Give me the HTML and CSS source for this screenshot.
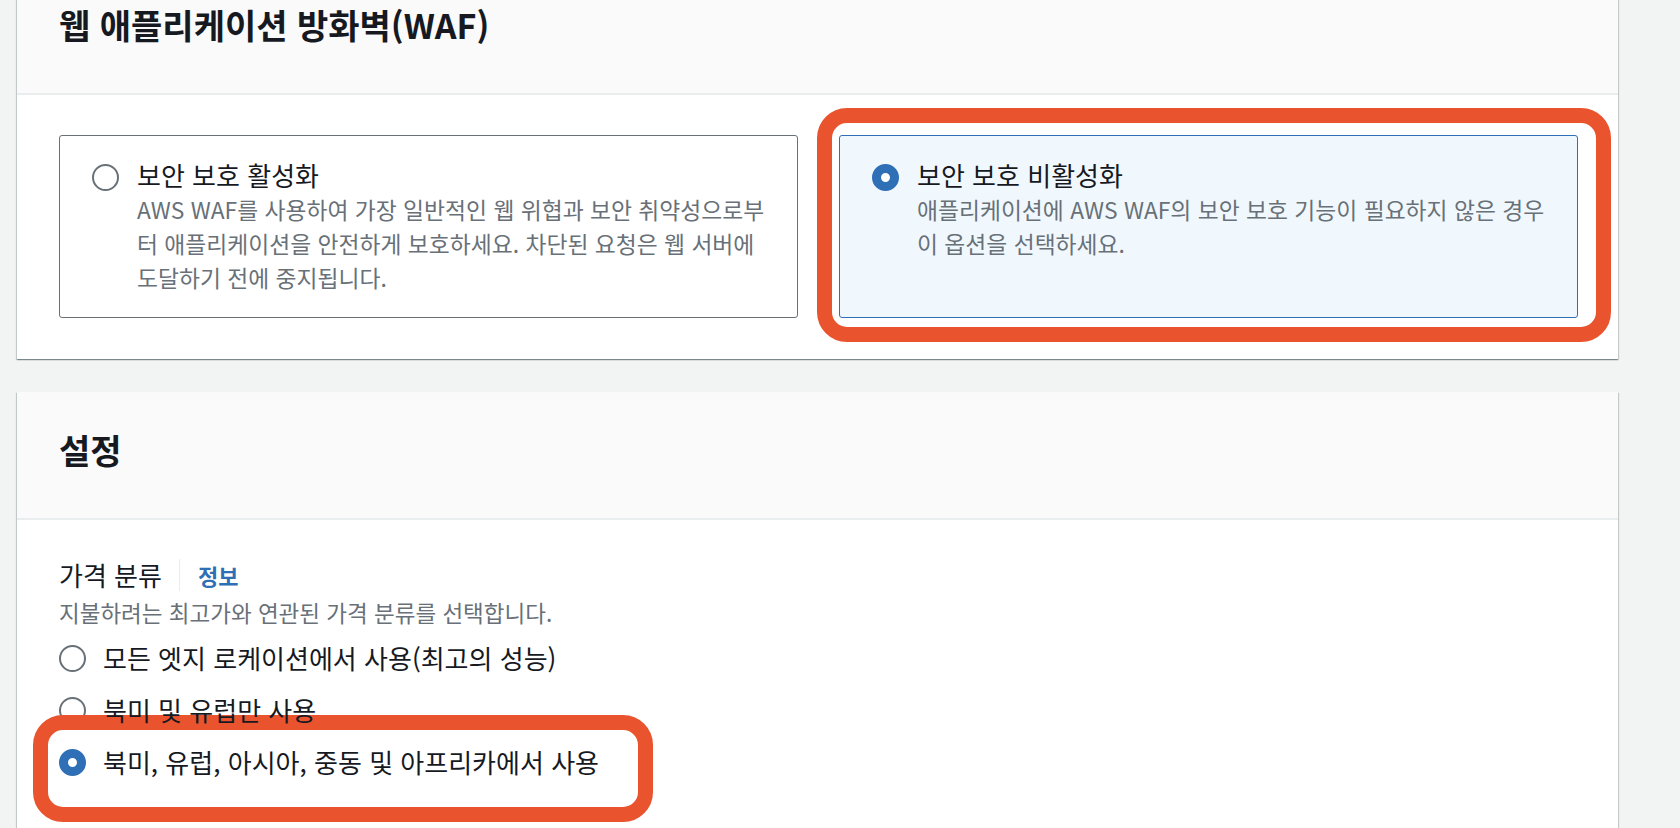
FILE: index.html
```html
<!DOCTYPE html>
<html lang="ko">
<head>
<meta charset="utf-8">
<title>CloudFront 배포 설정</title>
<link rel="stylesheet" href="styles.css">
</head>
<body>
<main class="page">
  <section class="panel">
    <header class="panel-header">
      <h2 class="panel-title">웹 애플리케이션 방화벽(WAF)</h2>
    </header>
    <div class="panel-body">
      <div class="tiles">
        <div class="tile">
          <span class="radio"></span>
          <div class="tile-text">
            <div class="tile-title">보안 보호 활성화</div>
            <div class="tile-desc">AWS WAF를 사용하여 가장 일반적인 웹 위협과 보안 취약성으로부터 애플리케이션을 안전하게 보호하세요. 차단된 요청은 웹 서버에 도달하기 전에 중지됩니다.</div>
          </div>
        </div>
        <div class="tile tile-selected">
          <span class="highlight highlight-tile"></span>
          <span class="radio radio-checked"></span>
          <div class="tile-text">
            <div class="tile-title">보안 보호 비활성화</div>
            <div class="tile-desc">애플리케이션에 AWS WAF의 보안 보호 기능이 필요하지 않은 경우 이 옵션을 선택하세요.</div>
          </div>
        </div>
      </div>
    </div>
  </section>

  <section class="panel">
    <header class="panel-header">
      <h2 class="panel-title">설정</h2>
    </header>
    <div class="panel-body panel-body-settings">
      <div class="field-label">
        <span class="label-text">가격 분류</span>
        <span class="label-sep"></span>
        <a class="info-link">정보</a>
      </div>
      <div class="field-desc">지불하려는 최고가와 연관된 가격 분류를 선택합니다.</div>
      <div class="options">
        <div class="option">
          <span class="radio"></span>
          <span class="option-label">모든 엣지 로케이션에서 사용(최고의 성능)</span>
        </div>
        <div class="option">
          <span class="radio"></span>
          <span class="option-label">북미 및 유럽만 사용</span>
        </div>
        <div class="option option-marked">
          <span class="highlight highlight-option"></span>
          <span class="radio radio-checked"></span>
          <span class="option-label">북미, 유럽, 아시아, 중동 및 아프리카에서 사용</span>
        </div>
      </div>
    </div>
  </section>
</main>
</body>
</html>
```
FILE: styles.css
```css
html {
  overflow: hidden;
}

body {
  margin: 0;
  background: #f2f3f3;
  font-family: "Noto Sans CJK KR", "Noto Sans", sans-serif;
  color: #16191f;
}

.page {
  width: 1601px;
  margin: -33px 0 0 17px;
  display: flex;
  flex-direction: column;
  gap: 33px;
}

.panel {
  background: #ffffff;
  box-shadow: 0 1px 1px 0 rgba(0, 28, 36, 0.3),
              1px 1px 1px 0 rgba(0, 28, 36, 0.15),
              -1px 1px 1px 0 rgba(0, 28, 36, 0.15);
}

.panel-header {
  background: #fafafa;
  border-bottom: 2px solid #eaeded;
  height: 126px;
  box-sizing: content-box;
  padding: 0 42px;
}

.panel-title {
  margin: 0;
  padding-top: 38px;
  font-size: 34px;
  line-height: 40px;
  font-weight: 700;
  color: #16191f;
}

.panel-body {
  padding: 40px 40px 41px 42px;
}

.tiles {
  display: grid;
  grid-template-columns: 1fr 1fr;
  gap: 41px;
}

.tile {
  position: relative;
  display: flex;
  align-items: flex-start;
  gap: 18px;
  border: 1px solid #687078;
  border-radius: 3px;
  padding: 21px 22px 22px 32px;
  background: #ffffff;
}

.tile-selected {
  border-color: #2f6fb5;
  background: #f1f8fd;
}

.tile .radio {
  margin-top: 7px;
}

.tile-text {
  flex: 1;
  min-width: 0;
}

.tile-title {
  font-size: 26px;
  line-height: 36px;
  color: #16191f;
}

.tile-desc {
  font-size: 22.8px;
  line-height: 34px;
  color: #687078;
}

.radio {
  flex: none;
  width: 27px;
  height: 27px;
  box-sizing: border-box;
  border-radius: 50%;
  border: 2px solid #687078;
  background: #ffffff;
}

.radio-checked {
  border: 9px solid #2f6fb5;
}

.highlight {
  position: absolute;
  z-index: 1;
  box-sizing: border-box;
  border: 15px solid #e9542f;
  border-radius: 30px;
  pointer-events: none;
}

.highlight-tile {
  left: -23px;
  top: -28px;
  width: 794px;
  height: 234px;
}

.panel-body-settings {
  padding-top: 38px;
  padding-bottom: 120px;
}

.field-label {
  display: flex;
  align-items: center;
  height: 34px;
}

.label-text {
  font-size: 26px;
  line-height: 34px;
  color: #16191f;
}

.label-sep {
  width: 1px;
  height: 32px;
  background: #eaeded;
  margin: 0 18px 0 17px;
}

.info-link {
  font-size: 22px;
  line-height: 34px;
  font-weight: 700;
  color: #2f6fb5;
  text-decoration: none;
}

.field-desc {
  margin-top: 4px;
  font-size: 22.5px;
  line-height: 32px;
  color: #687078;
}

.options {
  margin-top: 4px;
  display: flex;
  flex-direction: column;
}

.option {
  position: relative;
  display: flex;
  align-items: center;
  gap: 17px;
  height: 52px;
}

.option-label {
  position: relative;
  z-index: 2;
  font-size: 26px;
  line-height: 34px;
  color: #16191f;
}

.option-marked .radio {
  position: relative;
  z-index: 2;
}

.highlight-option {
  left: -26px;
  top: -21px;
  width: 620px;
  height: 107px;
}
```
